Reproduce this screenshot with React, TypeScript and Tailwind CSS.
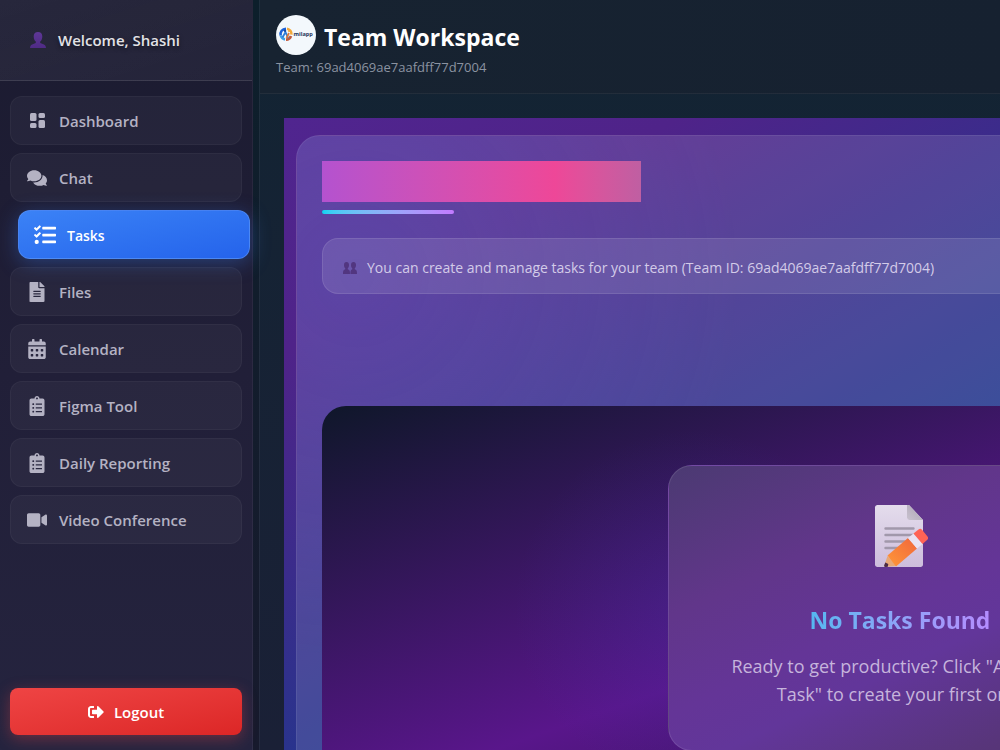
import type { ReactNode } from 'react';
import clsx from 'clsx';
import {
  FaCalendarAlt,
  FaClipboardList,
  FaComments,
  FaFileAlt,
  FaSignOutAlt,
  FaTasks,
  FaVideo,
} from 'react-icons/fa';

const TEAM_ID = '69ad4069ae7aafdff77d7004';

const DashboardIcon = () => (
  <svg viewBox="0 0 15 15" className="size-[15px]" fill="currentColor" aria-hidden="true">
    <rect width="6.500" height="8" rx="1.500" />
    <rect y="10" width="6.500" height="5" rx="1.500" />
    <rect x="8.500" width="6.500" height="5" rx="1.500" />
    <rect x="8.500" y="7" width="6.500" height="8" rx="1.500" />
  </svg>
);

type NavItem = { label: string; icon: ReactNode; active?: boolean };

const navItems: NavItem[] = [
  { label: 'Dashboard', icon: <DashboardIcon /> },
  { label: 'Chat', icon: <FaComments size={20} /> },
  { label: 'Tasks', icon: <FaTasks size={22} className="shrink-0" />, active: true },
  { label: 'Files', icon: <FaFileAlt size={20} /> },
  { label: 'Calendar', icon: <FaCalendarAlt size={20} /> },
  { label: 'Figma Tool', icon: <FaClipboardList size={20} /> },
  { label: 'Daily Reporting', icon: <FaClipboardList size={20} /> },
  { label: 'Video Conference', icon: <FaVideo size={20} /> },
];

const UserIcon = () => (
  <svg viewBox="0 0 16 17" className="h-[17px] w-4" aria-hidden="true">
    <defs>
      <linearGradient id="user" x1="0" y1="0" x2="0" y2="1">
        <stop offset="0" stopColor="#5e3797" />
        <stop offset="1" stopColor="#4f2b85" />
      </linearGradient>
    </defs>
    <path
      fill="url(#user)"
      d="M8 0c2.600 0 4.300 1.500 4.300 4.200 0 2.400-.8 4.300-2.100 5.300v1.400l3.700 1.500c1.300.6 1.900 1.600 2.100 3.600H0c.2-2 .8-3 2.100-3.600l3.700-1.500V9.500C4.500 8.500 3.700 6.600 3.700 4.200 3.700 1.500 5.400 0 8 0z"
    />
  </svg>
);

const UsersIcon = () => (
  <svg viewBox="0 0 14 12" className="h-3 w-3.5" fill="#523680" aria-hidden="true">
    <path d="M3.500 0C5.200 0 6 1.200 6 2.900c0 1.500-.5 2.600-1.200 3.200v1.200l1.300.8c.6.5.9 1.500.9 3.900H0c0-2.400.3-3.400.9-3.900l1.300-.8V6.100C1.500 5.500 1 4.400 1 2.900 1 1.200 1.800 0 3.500 0z" />
    <path d="M10.500 0C12.200 0 13 1.200 13 2.900c0 1.500-.5 2.600-1.200 3.200v1.200l1.300.8c.6.5.9 1.500.9 3.900H7.400c0-2.400.3-3.400.7-3.900l1.100-.8V6.100C8.500 5.500 8 4.400 8 2.900 8 1.200 8.800 0 10.500 0z" />
  </svg>
);

const Logo = () => (
  <svg viewBox="0 0 40 40" className="size-10 rounded-full bg-[#f3f8fc]" role="img" aria-label="milapp">
    <g fill="none" strokeWidth="2.600">
      <path d="M4.700 20.500A5.400 5.400 0 0 1 10 13.700" stroke="#1d63d8" />
      <path d="M11 13.700a5.400 5.400 0 0 1 4.400 6" stroke="#f2a83a" />
      <path d="M15 21a5.400 5.400 0 0 1-5 3.600" stroke="#c05a3c" />
      <path d="M9 24.500a5.400 5.400 0 0 1-4.200-4" stroke="#3fa0e6" />
      <path d="M6.500 22.500 9.500 17l2.500 6" stroke="#2f7fd8" strokeWidth="1.800" />
      <path d="m10.500 23 2.500-5" stroke="#d7793f" strokeWidth="1.800" />
    </g>
    <circle cx="9" cy="15.800" r="1.200" fill="#1848a8" />
    <circle cx="13" cy="16" r="1.100" fill="#f2a83a" />
    <text x="17.500" y="20.700" fontSize="5.600" fontWeight="700" fill="#25365a">
      milapp
    </text>
  </svg>
);

const MemoIcon = () => (
  <svg viewBox="0 0 56 64" className="h-16 w-14" aria-hidden="true">
    <defs>
      <linearGradient id="paper" x1="0" y1="0" x2="0" y2="1">
        <stop offset="0" stopColor="#e4dcec" />
        <stop offset="1" stopColor="#cdbddc" />
      </linearGradient>
      <linearGradient id="fold" x1="0" y1="1" x2="1" y2="0">
        <stop offset="0" stopColor="#c9c2cf" />
        <stop offset="1" stopColor="#aaa2b2" />
      </linearGradient>
      <linearGradient id="pencil" x1="0" y1="1" x2="1" y2="0">
        <stop offset="0" stopColor="#ff9838" />
        <stop offset="1" stopColor="#f0663c" />
      </linearGradient>
    </defs>
    <path fill="url(#paper)" d="M5.500 1H37l14 15v44.500c0 1.400-1 2.500-2.500 2.500h-43C4 63 3 62 3 60.500v-57C3 2 4 1 5.500 1z" />
    <path fill="url(#fold)" d="m37 1 14 15H37.500A3 3 0 0 1 35 13.500V1z" />
    <g stroke="#a198ab" strokeWidth="2.400" strokeLinecap="round">
      <path d="M13.500 24.500h28M13.500 31h28M13.500 37.500h20M13.500 44h15" />
    </g>
    <path fill="#e8a877" d="m15.500 52-3 9c-.4 1.200.2 2 1.500 1.800l11-.8z" />
    <path fill="url(#pencil)" d="M15.500 51.500 36 34l9 10.500L24 62.500z" />
    <path fill="#e9e2f2" d="m36 34 5.500-4.500 9 10.500-5.500 4.500z" />
    <path fill="#ff6355" d="m41.500 29.500 5-4c1-.9 2.500-.9 3.500.2l5.500 6.800c.9 1 .8 2.300-.2 3.200l-4.800 4.300z" />
    <path fill="#4a2b46" d="m13.300 58.500 3 1.500-.5 2.700-2 .2c-1.400.1-2-.7-1.500-1.900z" />
  </svg>
);

const Sidebar = () => (
  <aside className="flex w-[253px] shrink-0 flex-col border-r border-white/5 bg-linear-to-b from-[#1b1b30] via-[#211f38] to-[#25243f]">
    <div className="flex h-[81px] items-center gap-3 border-b border-white/10 bg-white/4 bg-linear-to-br from-white/2 to-transparent pl-[30px] text-[15px] font-semibold text-[#e2e2e6] [text-shadow:0_2px_4px_rgba(0,0,0,0.5)]">
      <UserIcon />
      <span>Welcome, Shashi</span>
    </div>

    <nav className="flex flex-1 flex-col gap-2 px-2.5 pt-[15px]">
      {navItems.map(({ label, icon, active }) => (
        <a
          key={label}
          href="#"
          aria-current={active ? 'page' : undefined}
          className={clsx(
            'flex h-[49px] shrink-0 items-center gap-3 rounded-xl border px-4 font-semibold',
            active
              ? 'z-10 translate-x-2 border-[#5b93f5]/60 bg-linear-to-br from-[#3b82f6] to-[#2563eb] text-sm text-white shadow-[0_4px_20px_rgba(59,130,246,0.35)]'
              : 'border-white/4 bg-white/4 text-[15px] text-[#b4b2c3]',
          )}
        >
          <span className="flex w-5 shrink-0 justify-center">{icon}</span>
          <span className="pt-0.5">{label}</span>
        </a>
      ))}
    </nav>

    <div className="px-2.5 pb-[15px]">
      <button
        type="button"
        className="flex h-[47px] w-full items-center justify-center gap-2.5 rounded-lg bg-linear-to-br from-[#ef4444] to-[#dc2626] text-[15px] font-semibold text-white shadow-[0_4px_15px_rgba(239,68,68,0.35)]"
      >
        <FaSignOutAlt size={16} />
        <span className="pt-0.5">Logout</span>
      </button>
    </div>
  </aside>
);

const Header = () => (
  <header className="h-[94px] shrink-0 border-b border-white/5 bg-linear-to-r from-[#172331] to-[#162130] pt-[15px] pl-4">
    <div className="flex items-center gap-2">
      <Logo />
      <h1 className="pt-1 text-[23px] leading-9 font-bold text-white">Team Workspace</h1>
    </div>
    <p className="text-[13px] leading-6 text-[#8b93a1]">Team: {TEAM_ID}</p>
  </header>
);

const EmptyState = () => (
  <div className="flex h-[404px] items-center justify-center rounded-3xl bg-[radial-gradient(circle_at_32%_50%,rgba(59,60,180,0.22),transparent_22%),linear-gradient(to_bottom_right,#0f172a,#59168b,#0f172a)]">
    <div className="flex h-[286px] w-[464px] flex-col items-center rounded-3xl border border-white/10 bg-[linear-gradient(155deg,#4b3a72_0%,#61368a_30%,#643597_50%,#62369a_62%,#573578_87%,#4b3370_100%)] px-12 pt-[38px] text-center">
      <MemoIcon />
      <h2 className="mt-9 bg-linear-to-r from-[#53b8f0] to-[#b48cff] bg-clip-text text-[23px] leading-8 font-bold text-transparent">
        No Tasks Found
      </h2>
      <p className="mt-4 text-lg leading-7 whitespace-nowrap text-[#c6b4dc]">
        Ready to get productive? Click &quot;Add New
        <br />
        Task&quot; to create your first one!
      </p>
    </div>
  </div>
);

const TaskBoard = () => (
  <section className="min-w-[1232px] bg-[linear-gradient(to_bottom_right,#50258f_0%,#4f2389_16%,#1c398e_53%,#312c85_100%)] px-3 py-[17px]">
    <div className="rounded-3xl border border-white/7 bg-white/12 bg-[radial-gradient(circle_at_5%_20%,rgba(60,90,210,0.22),transparent_30%)] p-[25px]">
      {/* title block and its accent line */}
      <div className="h-[41px] w-[319px] bg-linear-to-r from-[#b452cf] via-[#ee4798] via-73% to-[#bf5fa2]" />
      <div className="mt-2 h-1 w-[132px] rounded-full bg-linear-to-r from-[#00d3f2] to-[#c27aff]" />

      <div className="mt-6 flex h-14 items-center gap-2.5 rounded-2xl border border-white/10 bg-white/10 px-5 pt-1 text-sm text-[#d3cbe8]">
        <UsersIcon />
        <p>You can create and manage tasks for your team (Team ID: {TEAM_ID})</p>
      </div>

      <div className="pt-28">
        <EmptyState />
      </div>
    </div>
  </section>
);

export default function App() {
  return (
    <div className="flex h-screen gap-1.5 overflow-hidden bg-linear-to-b from-[#0c1f2b] to-[#171a2d] font-['Open_Sans','Noto_Sans',sans-serif]">
      <Sidebar />
      <div className="flex min-w-0 flex-1 flex-col border-l border-white/5 bg-linear-to-b from-[#122433] to-[#1a2036]">
        <Header />
        <main className="flex-1 overflow-hidden p-6">
          <TaskBoard />
        </main>
      </div>
    </div>
  );
}
